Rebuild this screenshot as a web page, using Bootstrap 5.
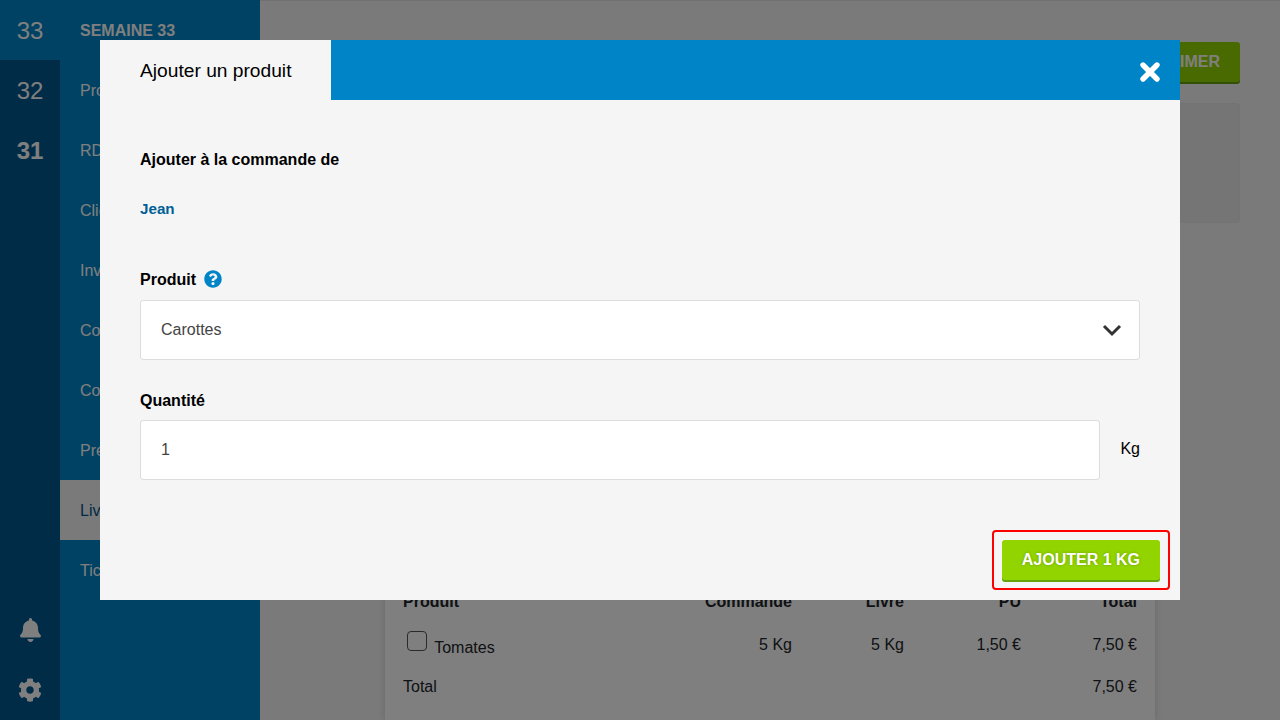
<!DOCTYPE html>
<html lang="fr">
<head>
  <meta charset="UTF-8">
  <title>Ajouter un produit</title>
  <link href="https://cdn.jsdelivr.net/npm/bootstrap@5.3.3/dist/css/bootstrap.min.css" rel="stylesheet">
  <style>
    html, body { height: 100%; overflow: hidden; }
    body { font-family: "Liberation Sans", Arial, sans-serif; font-size: 16px; color: #000; background: #f5f5f5; }

    /* sidebar */
    .week-rail { width: 60px; background: #005890; }
    .week-link { height: 60px; padding-top: 2px; color: #fff; font-size: 24px; text-decoration: none; }
    .week-link.current { background: #0084c8; }
    .rail-icon { height: 60px; }
    .rail-icon svg { fill: #fff; }
    .menu-panel { width: 200px; background: #0084c8; }
    .menu-link { height: 60px; padding: 2px 0 0 20px; color: #fff; text-decoration: none; }
    .menu-link.active-link { background: #f5f5f5; color: #005890; }

    /* page behind the dialog */
    .page-main { height: 100vh; border-top: 1px solid #e0e0e0; padding: 41px 40px 0 20px; }
    .print-btn { height: 40px; padding: 0 20px; border: 0; border-radius: 3px; background: #92d400; color: #fff; font-weight: 700; box-shadow: 0 2px 0 #65a30a; }
    .info-box { height: 120px; margin-top: 21px; background: #ebebeb; border: 1px solid #e6e6e6; border-radius: 4px; }
    .order-card { width: 770px; margin: 30px 0 0 105px; background: #fff; box-shadow: 0 0 8px rgba(0,0,0,.15); padding: 327px 8px 0; }
    .order-card table { table-layout: fixed; width: 754px; margin: 0; --bs-table-bg: transparent; }
    .order-card th, .order-card td { padding: 0 10px; vertical-align: middle; }
    .order-card thead tr { height: 44px; }
    .order-card tbody tr { height: 42px; }
    .order-card .form-check-input { width: 20px; height: 20px; margin: 0 3px 0 4px; border-color: #555; border-radius: 4px; float: none; vertical-align: 2px; }

    /* dialog */
    .dim-layer { background: rgba(0,0,0,.5); padding: 40px 100px; }
    .add-dialog { width: 1080px; height: 560px; background: #f5f5f5; }
    .dialog-head { height: 60px; background: #0084c8; }
    .dialog-tab { width: 231px; padding: 2px 0 0 40px; background: #f5f5f5; font-size: 19.2px; }
    .dialog-close { width: 60px; background: none; border: 0; padding: 3px 0 0; }
    .dialog-body { padding: 0 40px; }
    .dialog-title { height: 20px; margin-top: 50px; line-height: 20px; font-weight: 700; }
    .client-name { height: 20px; margin-top: 29px; line-height: 20px; font-size: 15.2px; font-weight: 700; color: #005f96; }
    .field-label { height: 20px; margin: 0 0 11px; padding-top: 2px; line-height: 20px; font-weight: 700; }
    .field-label svg { fill: #0084c8; margin-top: -2px; }
    .add-dialog .form-select, .add-dialog .form-control { height: 60px; padding: 0 20px; border: 1px solid #ddd; border-radius: 3px; color: #444; font-size: 16px; }
    .add-dialog .form-select { background-image: url("data:image/svg+xml,%3Csvg xmlns='http://www.w3.org/2000/svg' viewBox='0 0 20 14'%3E%3Cpath d='M2 3l8 8 8-8' fill='none' stroke='%23333' stroke-width='3'/%3E%3C/svg%3E"); background-position: right 17px center; background-size: 20px 14px; }
    .unit-label { width: 40px; padding-bottom: 2px; text-align: right; }
    .add-highlight { margin: 50px -30px 0 0; padding: 8px; border: 2px solid #f00; border-radius: 4px; }
    .add-btn { height: 40px; padding: 0 20px; border: 0; border-radius: 3px; background: #92d400; color: #fff; font-weight: 700; text-shadow: 0 0 3px rgba(0,0,0,.25); box-shadow: 0 2px 0 #65a30a; }
    .add-btn:hover { background: #92d400; color: #fff; }
  </style>
</head>
<body>
  <div class="d-flex h-100">
    <!-- weeks -->
    <nav class="week-rail d-flex flex-column flex-shrink-0">
      <a href="#" class="week-link current d-flex align-items-center justify-content-center">33</a>
      <a href="#" class="week-link d-flex align-items-center justify-content-center">32</a>
      <a href="#" class="week-link fw-bold d-flex align-items-center justify-content-center">31</a>
      <div class="rail-icon d-flex align-items-center justify-content-center mt-auto">
        <svg width="21" height="24" viewBox="0 0 448 512"><path d="M224 512c35.32 0 63.97-28.65 63.97-64H160.03c0 35.35 28.65 64 63.97 64zm215.39-149.71c-19.32-20.76-55.47-51.99-55.47-154.29 0-77.7-54.48-139.9-127.94-155.16V32c0-17.67-14.32-32-31.98-32s-31.98 14.33-31.98 32v20.84C118.56 68.1 64.08 130.3 64.08 208c0 102.3-36.15 133.53-55.47 154.29-6 6.45-8.66 14.16-8.61 21.71.11 16.4 12.98 32 32.1 32h383.8c19.12 0 32-15.6 32.1-32 .05-7.55-2.61-15.27-8.61-21.71z"/></svg>
      </div>
      <div class="rail-icon d-flex align-items-center justify-content-center">
        <svg width="24" height="24" viewBox="0 0 512 512"><path d="M487.4 315.7l-42.6-24.6c4.3-23.2 4.3-47 0-70.2l42.6-24.6c4.9-2.8 7.1-8.6 5.5-14-11.1-35.6-30-67.8-54.7-94.6-3.8-4.1-10-5.1-14.8-2.3L380.8 110c-17.9-15.4-38.5-27.3-60.8-35.1V25.8c0-5.6-3.9-10.5-9.4-11.7-36.7-8.2-74.3-7.8-109.2 0-5.5 1.2-9.4 6.1-9.4 11.7V75c-22.2 7.9-42.8 19.8-60.8 35.1L88.7 85.5c-4.9-2.8-11-1.9-14.8 2.3-24.7 26.7-43.6 58.9-54.7 94.6-1.7 5.4.6 11.2 5.5 14L67.3 221c-4.3 23.2-4.3 47 0 70.2l-42.6 24.6c-4.9 2.8-7.1 8.6-5.5 14 11.1 35.6 30 67.8 54.7 94.6 3.8 4.1 10 5.1 14.8 2.3l42.6-24.6c17.9 15.4 38.5 27.3 60.8 35.1v49.2c0 5.6 3.9 10.5 9.4 11.7 36.7 8.2 74.3 7.8 109.2 0 5.5-1.2 9.4-6.1 9.4-11.7v-49.2c22.2-7.9 42.8-19.8 60.8-35.1l42.6 24.6c4.9 2.8 11 1.9 14.8-2.3 24.7-26.7 43.6-58.9 54.7-94.6 1.5-5.5-.7-11.3-5.6-14.1zM256 336c-44.1 0-80-35.9-80-80s35.9-80 80-80 80 35.9 80 80-35.9 80-80 80z"/></svg>
      </div>
    </nav>

    <!-- menu -->
    <nav class="menu-panel d-flex flex-column flex-shrink-0">
      <div class="menu-link fw-bold d-flex align-items-center">SEMAINE 33</div>
      <a href="#" class="menu-link d-flex align-items-center">Produits</a>
      <a href="#" class="menu-link d-flex align-items-center">RDV</a>
      <a href="#" class="menu-link d-flex align-items-center">Clients</a>
      <a href="#" class="menu-link d-flex align-items-center">Inventaire</a>
      <a href="#" class="menu-link d-flex align-items-center">Commandes</a>
      <a href="#" class="menu-link d-flex align-items-center">Comptes</a>
      <a href="#" class="menu-link d-flex align-items-center">Préparation</a>
      <a href="#" class="menu-link active-link d-flex align-items-center">Livraison</a>
      <a href="#" class="menu-link d-flex align-items-center">Tickets</a>
    </nav>

    <!-- page -->
    <main class="page-main flex-grow-1 d-flex flex-column overflow-hidden">
      <div class="d-flex justify-content-end">
        <button type="button" class="print-btn">IMPRIMER</button>
      </div>
      <div class="info-box flex-shrink-0"></div>
      <div class="order-card flex-grow-1">
        <table class="table table-borderless">
          <colgroup>
            <col style="width: 242px"><col style="width: 167px"><col style="width: 112px"><col style="width: 117px"><col style="width: 116px">
          </colgroup>
          <thead>
            <tr>
              <th>Produit</th>
              <th class="text-end">Commandé</th>
              <th class="text-end">Livré</th>
              <th class="text-end">PU</th>
              <th class="text-end">Total</th>
            </tr>
          </thead>
          <tbody>
            <tr>
              <td><input class="form-check-input" type="checkbox"> Tomates</td>
              <td class="text-end">5 Kg</td>
              <td class="text-end">5 Kg</td>
              <td class="text-end">1,50 €</td>
              <td class="text-end">7,50 €</td>
            </tr>
            <tr>
              <td>Total</td>
              <td></td>
              <td></td>
              <td></td>
              <td class="text-end">7,50 €</td>
            </tr>
          </tbody>
        </table>
      </div>
    </main>
  </div>

  <!-- dialog over the page -->
  <div class="dim-layer position-fixed top-0 start-0 w-100 h-100">
    <div class="add-dialog d-flex flex-column">
      <div class="dialog-head d-flex justify-content-between">
        <div class="dialog-tab d-flex align-items-center">Ajouter un produit</div>
        <button type="button" class="dialog-close d-flex align-items-center justify-content-center" aria-label="Fermer">
          <svg width="22" height="22" viewBox="0 0 22 22"><path d="M4 4l14 14M18 4L4 18" fill="none" stroke="#fff" stroke-width="5.4" stroke-linecap="round"/></svg>
        </button>
      </div>
      <form class="dialog-body flex-grow-1 d-flex flex-column">
        <div class="dialog-title">Ajouter à la commande de</div>
        <div class="client-name">Jean</div>
        <label class="field-label d-flex align-items-center gap-2" style="margin-top: 50px">Produit
          <svg width="18" height="18" viewBox="0 0 512 512"><path d="M504 256c0 136.997-111.043 248-248 248S8 392.997 8 256C8 119.083 119.043 8 256 8s248 111.083 248 248zM262.655 90c-54.497 0-89.255 22.957-116.549 63.758-3.536 5.286-2.353 12.415 2.715 16.258l34.699 26.31c5.205 3.947 12.621 3.008 16.665-2.122 17.864-22.658 30.113-35.797 57.303-35.797 20.429 0 45.698 13.148 45.698 32.958 0 14.976-12.363 22.667-32.534 33.976C247.128 238.528 216 254.941 216 296v4c0 6.627 5.373 12 12 12h56c6.627 0 12-5.373 12-12v-1.333c0-28.462 83.186-29.647 83.186-106.667 0-58.002-60.165-102-116.531-102zM256 338c-25.365 0-46 20.635-46 46 0 25.364 20.635 46 46 46s46-20.636 46-46c0-25.365-20.635-46-46-46z"/></svg>
        </label>
        <select class="form-select">
          <option>Carottes</option>
          <option>Tomates</option>
        </select>
        <label class="field-label" style="margin-top: 29px">Quantité</label>
        <div class="d-flex align-items-center">
          <input type="text" class="form-control" value="1">
          <span class="unit-label flex-shrink-0">Kg</span>
        </div>
        <div class="add-highlight align-self-end">
          <button type="button" class="btn add-btn d-block">AJOUTER 1 KG</button>
        </div>
      </form>
    </div>
  </div>

  <script src="https://cdn.jsdelivr.net/npm/bootstrap@5.3.3/dist/js/bootstrap.bundle.min.js"></script>
</body>
</html>
